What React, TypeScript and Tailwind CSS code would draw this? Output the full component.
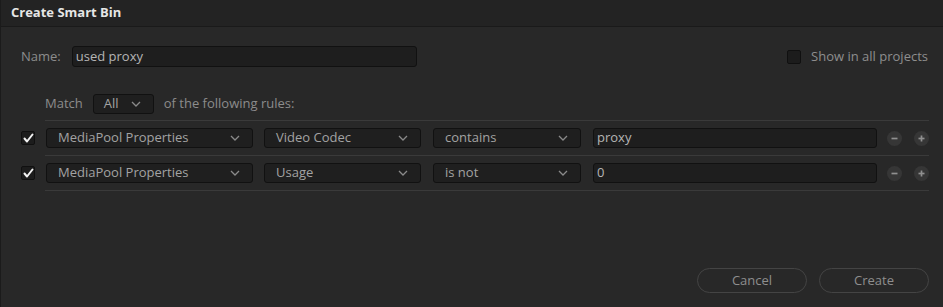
import React from "react";

const font = { fontFamily: '"Open Sans", "Noto Sans", sans-serif' };

function Chevron() {
    return (
        <svg width="10" height="6" viewBox="0 0 10 6" className="shrink-0">
            <polyline points="1,1 5,5 9,1" fill="none" stroke="#8a8a8a" strokeWidth="1.3" />
        </svg>
    );
}

function Dropdown({ label, w, pl = "pl-[11px]" }: { label: string; w: string; pl?: string }) {
    return (
        <div className={`${w} h-[20px] shrink-0 flex items-center justify-between ${pl} pr-[12px] bg-[#1f1f1f] border border-[#111111] rounded-[3px] text-[13px] text-[#a3a3a3]`}>
            <span>{label}</span>
            <Chevron />
        </div>
    );
}

function CheckBox({ checked }: { checked?: boolean }) {
    return (
        <div className="w-[14px] h-[14px] shrink-0 flex items-center justify-center bg-[#1c1c1c] border border-[#101010] rounded-[2px]">
            {checked && (
                <svg width="11" height="10" viewBox="0 0 11 10">
                    <polyline points="1.5,5.5 4,8.5 9.5,1.5" fill="none" stroke="#f2f2f2" strokeWidth="2" strokeLinecap="round" strokeLinejoin="round" />
                </svg>
            )}
        </div>
    );
}

function RoundBtn({ plus }: { plus?: boolean }) {
    return (
        <div className="w-[15px] h-[15px] shrink-0 rounded-full bg-[#363636] flex items-center justify-center">
            <svg width="9" height="9" viewBox="0 0 9 9">
                <line x1="1.5" y1="4.5" x2="7.5" y2="4.5" stroke="#909090" strokeWidth="1.7" />
                {plus && <line x1="4.5" y1="1.5" x2="4.5" y2="7.5" stroke="#909090" strokeWidth="1.7" />}
            </svg>
        </div>
    );
}

const rules = [
    { a: "MediaPool Properties", b: "Video Codec", c: "contains", v: "proxy" },
    { a: "MediaPool Properties", b: "Usage", c: "is not", v: "0" },
];

export default function App() {
    return (
        <div style={font} className="w-[943px] h-[307px] flex flex-col bg-[#282828] border-l border-[#1b1b1b] overflow-hidden">
            {/* title bar */}
            <div className="h-[27px] shrink-0 flex items-center pl-[10px] bg-[#232323] border-b border-[#1a1a1a]">
                <span className="text-[13px] font-bold text-[#e6e6e6]">Create Smart Bin</span>
            </div>

            {/* name row */}
            <div className="mt-[19px] h-[21px] flex items-center pl-[20px] pr-[15px]">
                <span className="text-[13px] text-[#8c8c8c]">Name:</span>
                <div className="ml-[11px] w-[345px] h-[21px] flex items-center pl-[3px] bg-[#1e1e1e] border border-[#111111] rounded-[3px] text-[13px] text-[#b5b5b5]">
                    used proxy
                </div>
                <div className="ml-auto flex items-center gap-[10px]">
                    <CheckBox />
                    <span className="text-[13px] text-[#8e8e8e]">Show in all projects</span>
                </div>
            </div>

            {/* match row */}
            <div className="mt-[26px] h-[21px] flex items-center pl-[44px]">
                <span className="text-[13px] text-[#8c8c8c]">Match</span>
                <div className="ml-[10px]">
                    <Dropdown label="All" w="w-[61px]" pl="pl-[10px]" />
                </div>
                <span className="ml-[10px] text-[13px] text-[#8c8c8c]">of the following rules:</span>
            </div>

            {/* rules */}
            <div className="mt-[6px] ml-[44px] mr-[14px] border-t border-[#3a3a3a]">
                {rules.map((r, i) => (
                    <div key={i} className="h-[35px] flex items-center border-b border-[#3a3a3a]">
                        <div className="-ml-[24px] mr-[11px]">
                            <CheckBox checked />
                        </div>
                        <Dropdown label={r.a} w="w-[207px]" />
                        <div className="ml-[11px]">
                            <Dropdown label={r.b} w="w-[157px]" />
                        </div>
                        <div className="ml-[12px]">
                            <Dropdown label={r.c} w="w-[148px]" />
                        </div>
                        <div className="ml-[12px] w-[286px] h-[20px] flex items-center pl-[3px] bg-[#1e1e1e] border border-[#111111] rounded-[3px] text-[13px] text-[#b5b5b5]">
                            {r.v}
                        </div>
                        <div className="ml-[10px]">
                            <RoundBtn />
                        </div>
                        <div className="ml-[12px]">
                            <RoundBtn plus />
                        </div>
                    </div>
                ))}
            </div>

            {/* buttons */}
            <div className="mt-auto mb-[14px] mr-[14px] flex justify-end gap-[12px]">
                <button className="w-[110px] h-[25px] rounded-full border border-[#444444] bg-[#282828] text-[13px] text-[#8e8e8e]">Cancel</button>
                <button className="w-[110px] h-[25px] rounded-full border border-[#444444] bg-[#282828] text-[13px] text-[#8e8e8e]">Create</button>
            </div>
        </div>
    );
}
